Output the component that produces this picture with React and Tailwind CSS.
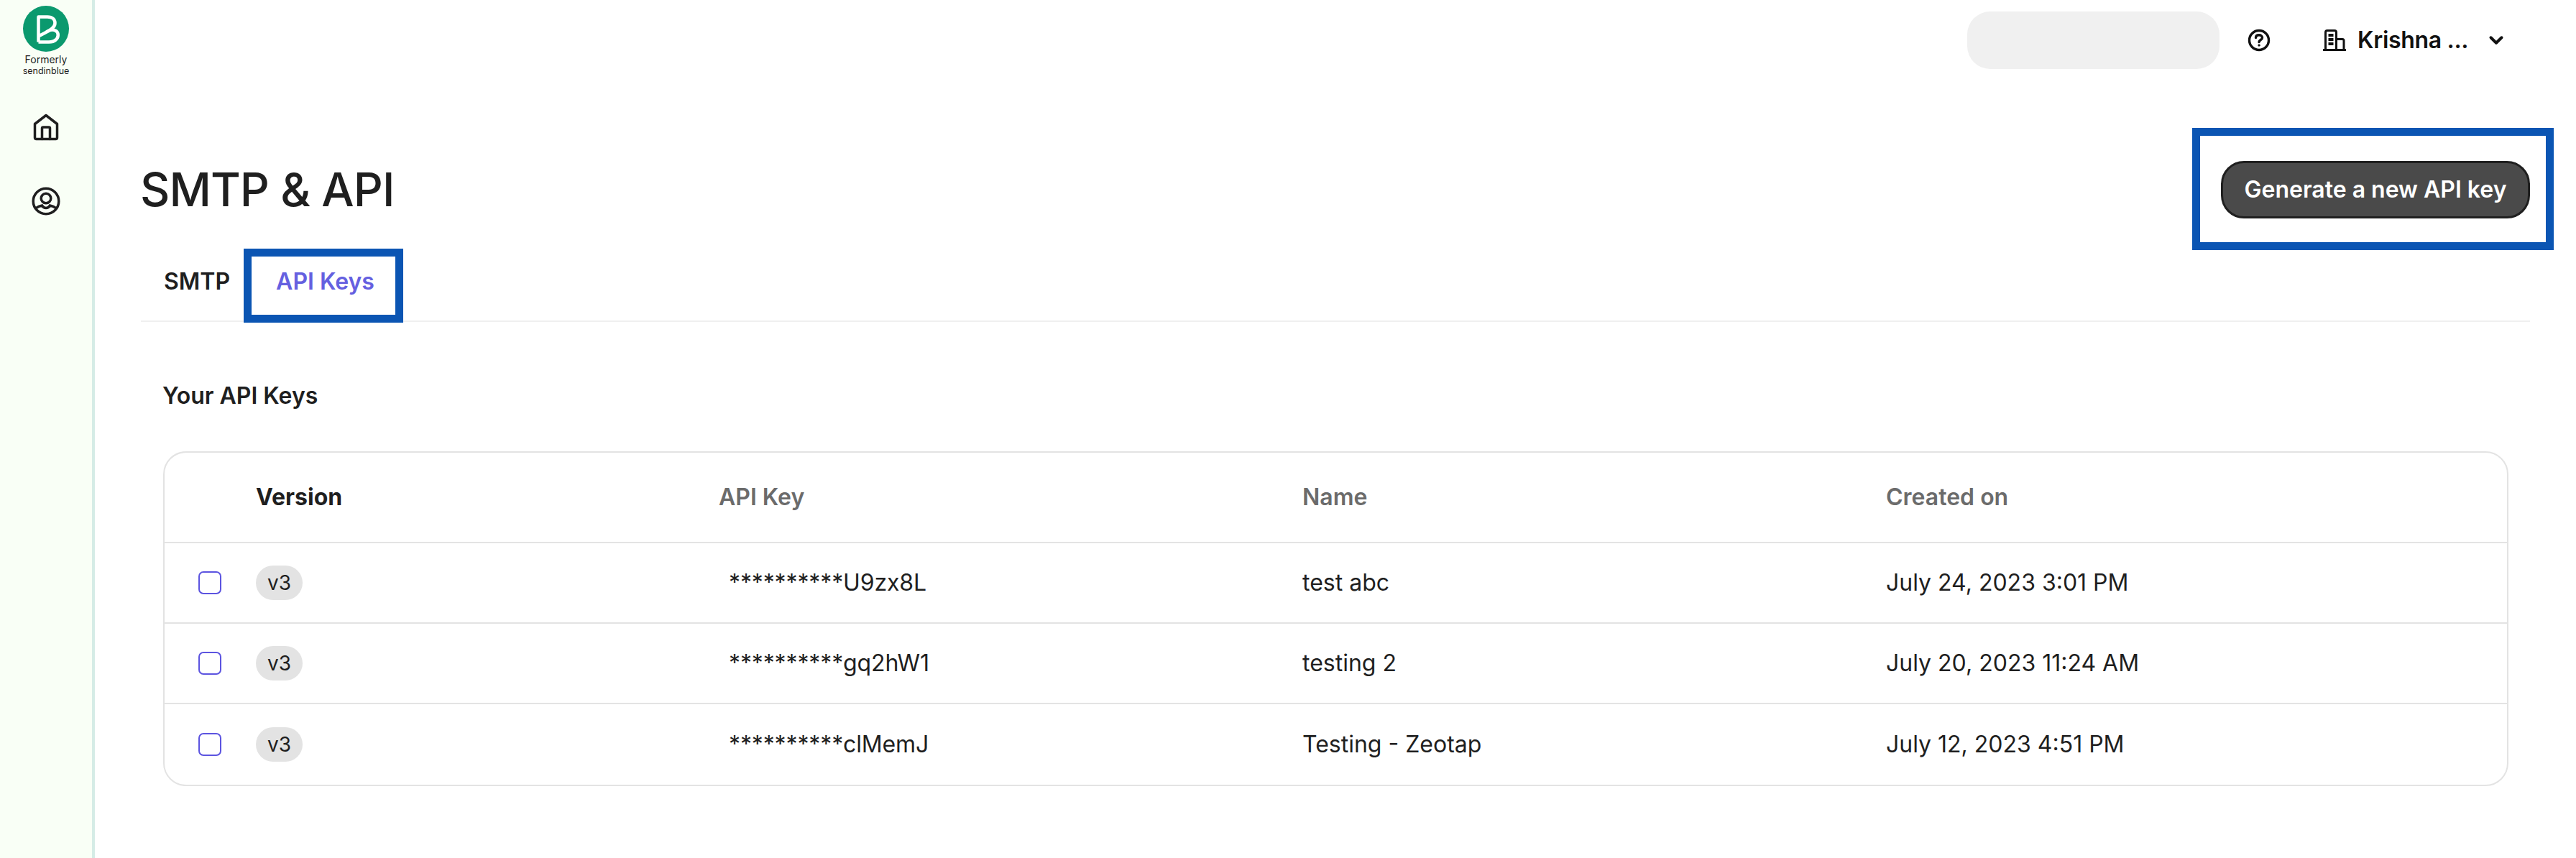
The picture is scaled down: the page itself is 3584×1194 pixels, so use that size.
import { ChevronDown } from 'lucide-react'

const apiKeys = [
  { key: '**********U9zx8L', name: 'test abc', created: 'July 24, 2023 3:01 PM' },
  { key: '**********gq2hW1', name: 'testing 2', created: 'July 20, 2023 11:24 AM' },
  { key: '**********clMemJ', name: 'Testing - Zeotap', created: 'July 12, 2023 4:51 PM' },
]

const tableCols = 'grid grid-cols-[127px_644px_812px_812px_1fr] items-center'

function Logo() {
  return (
    <svg width="64" height="64" viewBox="0 0 64 64" className="block">
      <circle cx="32" cy="32" r="32" fill="#0b996e" />
      <path
        d="M21.5 50.5V15.5H34C41 15.5 44.5 19 44.5 24C44.5 30 39 33.5 31 37.5L21.5 42.5M31 37.5C36 33.5 42 32.5 46 35C50 38 49.5 44 45.5 47.5C43 49.8 40 50.5 36 50.5H21.5"
        fill="none"
        stroke="#fff"
        strokeWidth="4.5"
        strokeLinejoin="round"
      />
    </svg>
  )
}

function HomeIcon() {
  return (
    <svg width="36" height="38" viewBox="0 0 36 38" fill="none" stroke="#1f1f1f" strokeWidth="3.5" strokeLinejoin="round" strokeLinecap="round">
      <path d="M2.5 14.5L18 2.5L33.5 14.5V33.5A2 2 0 0 1 31.5 35.5H4.5A2 2 0 0 1 2.5 33.5Z" />
      <path d="M12.5 35.5V20.5A1.5 1.5 0 0 1 14 19H22A1.5 1.5 0 0 1 23.5 20.5V35.5" />
    </svg>
  )
}

function UserIcon() {
  return (
    <svg width="40" height="40" viewBox="0 0 40 40" fill="none" stroke="#1f1f1f" strokeWidth="3.5">
      <circle cx="20" cy="20" r="17.8" />
      <circle cx="20" cy="16" r="6.8" />
      <path d="M5.5 30C9 27.5 12 26.5 14.5 26C16 28.5 18 29.5 20 29.5C22 29.5 24 28.5 25.5 26C28 26.5 31 27.5 34.5 30" />
    </svg>
  )
}

function HelpIcon() {
  return (
    <svg width="32" height="32" viewBox="0 0 32 32" fill="none" stroke="#111" strokeWidth="3.4" strokeLinecap="round">
      <circle cx="16" cy="16" r="13.5" />
      <path d="M11.5 12.5C11.5 10 13.5 8.8 16 8.8C18.5 8.8 20.5 10.2 20.5 12.4C20.5 15.5 16 15.5 16 18.5" />
      <circle cx="16" cy="23" r="1.2" fill="#111" strokeWidth="1" />
    </svg>
  )
}

function BuildingIcon() {
  return (
    <svg width="32" height="32" viewBox="0 0 32 32" fill="none" stroke="#111" strokeWidth="3">
      <path d="M1 29.5H31" strokeLinecap="round" />
      <path d="M3.5 29.5V5A2.5 2.5 0 0 1 6 2.5H16A2.5 2.5 0 0 1 18.5 5V29.5" />
      <path d="M18.5 14.5H27A2 2 0 0 1 29 16.5V29.5" />
      <path d="M7.5 9H14.5M7.5 15H14.5M7.5 21H14.5" strokeWidth="4" />
    </svg>
  )
}

// annotation frame drawn over the highlighted control
function Highlight({ className }) {
  return <span className={`absolute z-10 border-[11px] border-[#0b55b3] ${className}`} />
}

export default function App() {
  return (
    <div className="flex min-h-[1194px] bg-white font-['Inter',sans-serif] text-[32px] text-[#1f1f1f]">
      <aside className="flex w-[132px] shrink-0 flex-col items-center border-r-4 border-[#d5ece6] bg-[#f9fff6] pt-2">
        <Logo />
        <p className="mt-[2px] text-[14px] leading-[18px]">Formerly</p>
        <p className="text-[12.5px] leading-[14px]">sendinblue</p>
        <div className="mt-[52px]">
          <HomeIcon />
        </div>
        <div className="mt-[64px]">
          <UserIcon />
        </div>
      </aside>

      <main className="min-w-0 flex-1 px-16">
        <header className="flex h-[112px] items-center">
          <div className="ml-auto h-20 w-[351px] rounded-[32px] bg-[#f0f0f0]" />
          <div className="ml-[39px]">
            <HelpIcon />
          </div>
          <div className="ml-[73px]">
            <BuildingIcon />
          </div>
          <span className="ml-[16px] w-[150px] whitespace-nowrap font-semibold tracking-[-0.01em] text-[#111]">Krishna ...</span>
          <ChevronDown className="ml-[28px] mr-[32px]" size={30} strokeWidth={3.2} color="#111" />
        </header>

        <div className="mt-[112px] flex h-20 items-center justify-between">
          <h1 className="-ml-px text-[64px] font-medium leading-none tracking-[-0.014em]">SMTP &amp; API</h1>
          <div className="relative">
            <button className="h-20 w-[430px] rounded-[32px] border-[3px] border-[#1f1f1f] bg-[#4a4a4a] text-[32px] font-semibold text-white">
              Generate a new API key
            </button>
            <Highlight className="-top-[46px] -right-[33px] -bottom-[44px] -left-[40px]" />
          </div>
        </div>

        <nav className="flex h-[144px] border-b-2 border-[#f0f0f0] pt-[70px] font-semibold leading-9">
          <span className="px-8">SMTP</span>
          <span className="px-8">
            <span className="relative block text-[#6560e0]">
              API Keys
              <Highlight className="-top-[28px] -right-[40px] -bottom-[39px] -left-[45px]" />
            </span>
          </span>
        </nav>

        <section className="pl-[31px] pr-[30px]">
          <h2 className="mt-[85px] -ml-px font-semibold leading-9">Your API Keys</h2>
          <div className="mt-[59px] overflow-hidden rounded-[32px] border-2 border-[#e3e3e3]">
            <div className={`${tableCols} h-[126px] border-b-2 border-[#e3e3e3] font-semibold text-[#6b6b6b]`}>
              <span />
              <span className="font-bold text-[#1f1f1f]">Version</span>
              <span>API Key</span>
              <span>Name</span>
              <span>Created on</span>
            </div>
            {apiKeys.map((row, i) => (
              <div
                key={row.key}
                className={`${tableCols} h-[112px] ${i < apiKeys.length - 1 ? 'border-b-2 border-[#e3e3e3]' : ''}`}
              >
                <span className="ml-[47px] h-8 w-8 rounded-[7px] border-2 border-[#5c54e0]" />
                <span className="flex h-12 w-[65px] items-center justify-center rounded-full bg-[#e3e3e3] text-[28px]">v3</span>
                <span className="pl-[14px] tracking-[-0.004em]">{row.key}</span>
                <span>{row.name}</span>
                <span>{row.created}</span>
              </div>
            ))}
          </div>
        </section>
      </main>
    </div>
  )
}
